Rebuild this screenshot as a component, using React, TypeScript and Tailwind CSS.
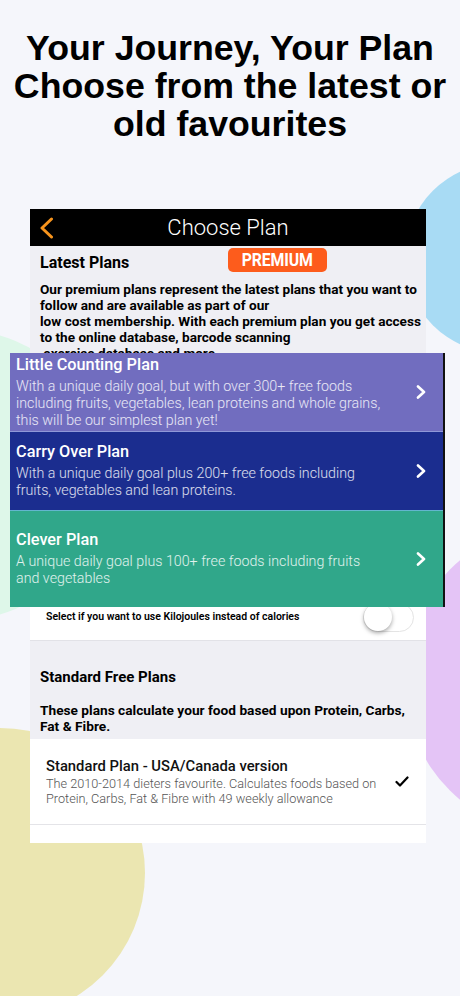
import React from "react";

const Chevron = () => (
  <svg width="10" height="14" viewBox="0 0 10 14" className="shrink-0">
    <polyline points="2,1.5 8,7 2,12.5" fill="none" stroke="white" strokeWidth="2.6" strokeLinecap="round" strokeLinejoin="round" />
  </svg>
);

export default function App() {
  return (
    <div className="relative h-[996px] w-[460px] overflow-hidden bg-[#f5f6fb]" style={{ fontFamily: "Roboto, 'Noto Sans', sans-serif" }}>
      <svg className="absolute left-0 top-0" width="460" height="996" viewBox="0 0 460 996">
        <circle cx="500" cy="258" r="95" fill="#a8dbf4" />
        <circle cx="-40" cy="475" r="145" fill="#def7e9" />
        <circle cx="560" cy="680" r="156" fill="#e4c4f6" />
        <circle cx="0" cy="873" r="145" fill="#ebe6b1" />
      </svg>

      <h1
        className="relative pt-[29px] text-center text-[35.7px] font-bold leading-[38px] text-black"
        style={{ fontFamily: "'Liberation Sans', Arial, sans-serif" }}
      >
        Your Journey, Your Plan
        <br />
        Choose from the latest or
        <br />
        old favourites
      </h1>

      <div className="relative ml-[30px] mt-[66px] w-[396px]">
        <header className="grid h-[37px] grid-cols-[40px_1fr_40px] items-center bg-black">
          <div className="pl-[9px]">
            <svg width="15" height="22" viewBox="0 0 15 22">
              <polyline points="12.5,2 3,11 12.5,20" fill="none" stroke="#f7941d" strokeWidth="3" strokeLinecap="round" strokeLinejoin="round" />
            </svg>
          </div>
          <div className="text-center text-[22px] font-light leading-[26px] text-white">Choose Plan</div>
          <div />
        </header>

        <section className="relative bg-[#efeff4] pl-[10px] pt-[7px] text-black">
          <h2 className="text-[16px] font-bold leading-[20px]">Latest Plans</h2>
          <div className="absolute left-[198px] top-[2px] flex h-[24px] w-[99px] items-center justify-center rounded-[5px] bg-[#fd5c1c]">
            <span className="inline-block scale-x-[0.88] text-[18px] font-bold leading-[20px] tracking-[-0.2px] text-white">PREMIUM</span>
          </div>
          <p className="mt-[8px] whitespace-nowrap text-[13.6px] font-bold leading-[16px]">
            Our premium plans represent the latest plans that you want to
            <br />
            follow and are available as part of our
            <br />
            low cost membership. With each premium plan you get access
            <br />
            to the online database, barcode scanning
            <br />
            ,exercise database and more
          </p>
        </section>

        <div className="relative z-10 -mb-[7px] -ml-[20px] -mt-[8px] w-[435px] border-r-2 border-[#111]">
          <div className="flex h-[78px] items-start justify-between bg-[#716dbf] pl-[6px] pr-[17px]">
            <div className="pt-[2px] text-white">
              <div className="text-[16.3px] font-medium leading-[20px]">Little Counting Plan</div>
              <div className="mt-[3px] whitespace-nowrap text-[14.25px] font-light leading-[17px] text-white/85">
                With a unique daily goal, but with over 300+ free foods
                <br />
                including fruits, vegetables, lean proteins and whole grains,
                <br />
                this will be our simplest plan yet!
              </div>
            </div>
            <div className="self-center"><Chevron /></div>
          </div>
          <div className="flex h-[79px] items-start justify-between border-t border-[#8f98d8] bg-[#1b2d8f] pl-[6px] pr-[17px]">
            <div className="pt-[10px] text-white">
              <div className="text-[16.3px] font-medium leading-[20px]">Carry Over Plan</div>
              <div className="mt-[3px] whitespace-nowrap text-[14.25px] font-light leading-[16.5px] text-white/85">
                With a unique daily goal plus 200+ free foods including
                <br />
                fruits, vegetables and lean proteins.
              </div>
            </div>
            <div className="self-center"><Chevron /></div>
          </div>
          <div className="flex h-[97px] items-start justify-between border-t border-[#63b5cf] bg-[#30a78a] pl-[6px] pr-[17px]">
            <div className="pt-[19px] text-white">
              <div className="text-[16.3px] font-medium leading-[20px]">Clever Plan</div>
              <div className="mt-[3px] whitespace-nowrap text-[14.25px] font-light leading-[16.5px] text-white/85">
                A unique daily goal plus 100+ free foods including fruits
                <br />
                and vegetables
              </div>
            </div>
            <div className="self-center"><Chevron /></div>
          </div>
        </div>

        <div className="flex h-[41px] items-center justify-between border-b border-[#e2e2e7] bg-white pb-[6px] pl-[16px] pr-[12px]">
          <span className="text-[10.5px] font-semibold leading-[12px] text-black">Select if you want to use Kilojoules instead of calories</span>
          <div className="flex h-[29px] w-[51px] items-center rounded-full border border-[#e4e4e4] bg-white">
            <div className="h-[28px] w-[28px] rounded-full bg-white shadow-[0_2px_4px_rgba(0,0,0,0.35)]" />
          </div>
        </div>

        <section className="h-[98px] bg-[#efeff4] pl-[10px] pt-[27px] text-black">
          <h3 className="text-[15px] font-bold leading-[18px]">Standard Free Plans</h3>
          <p className="mt-[16px] whitespace-nowrap text-[13.7px] font-bold leading-[16px]">
            These plans calculate your food based upon Protein, Carbs,
            <br />
            Fat &amp; Fibre.
          </p>
        </section>

        <div className="flex h-[86px] items-center justify-between border-b border-[#e4e4e8] bg-white pl-[16px] pr-[17px]">
          <div>
            <div className="text-[14.8px] font-medium leading-[18px] text-[#111]">Standard Plan - USA/Canada version</div>
            <div className="mt-[2px] whitespace-nowrap text-[12.7px] font-light leading-[14.7px] text-[#555]">
              The 2010-2014 dieters favourite. Calculates foods based on
              <br />
              Protein, Carbs, Fat &amp; Fibre with 49 weekly allowance
            </div>
          </div>
          <svg width="14" height="11" viewBox="0 0 14 11" className="shrink-0">
            <polyline points="1.5,6 5,9.5 12.5,1.5" fill="none" stroke="black" strokeWidth="2.2" strokeLinecap="round" strokeLinejoin="round" />
          </svg>
        </div>
        <div className="h-[18px] bg-white" />
      </div>
    </div>
  );
}
